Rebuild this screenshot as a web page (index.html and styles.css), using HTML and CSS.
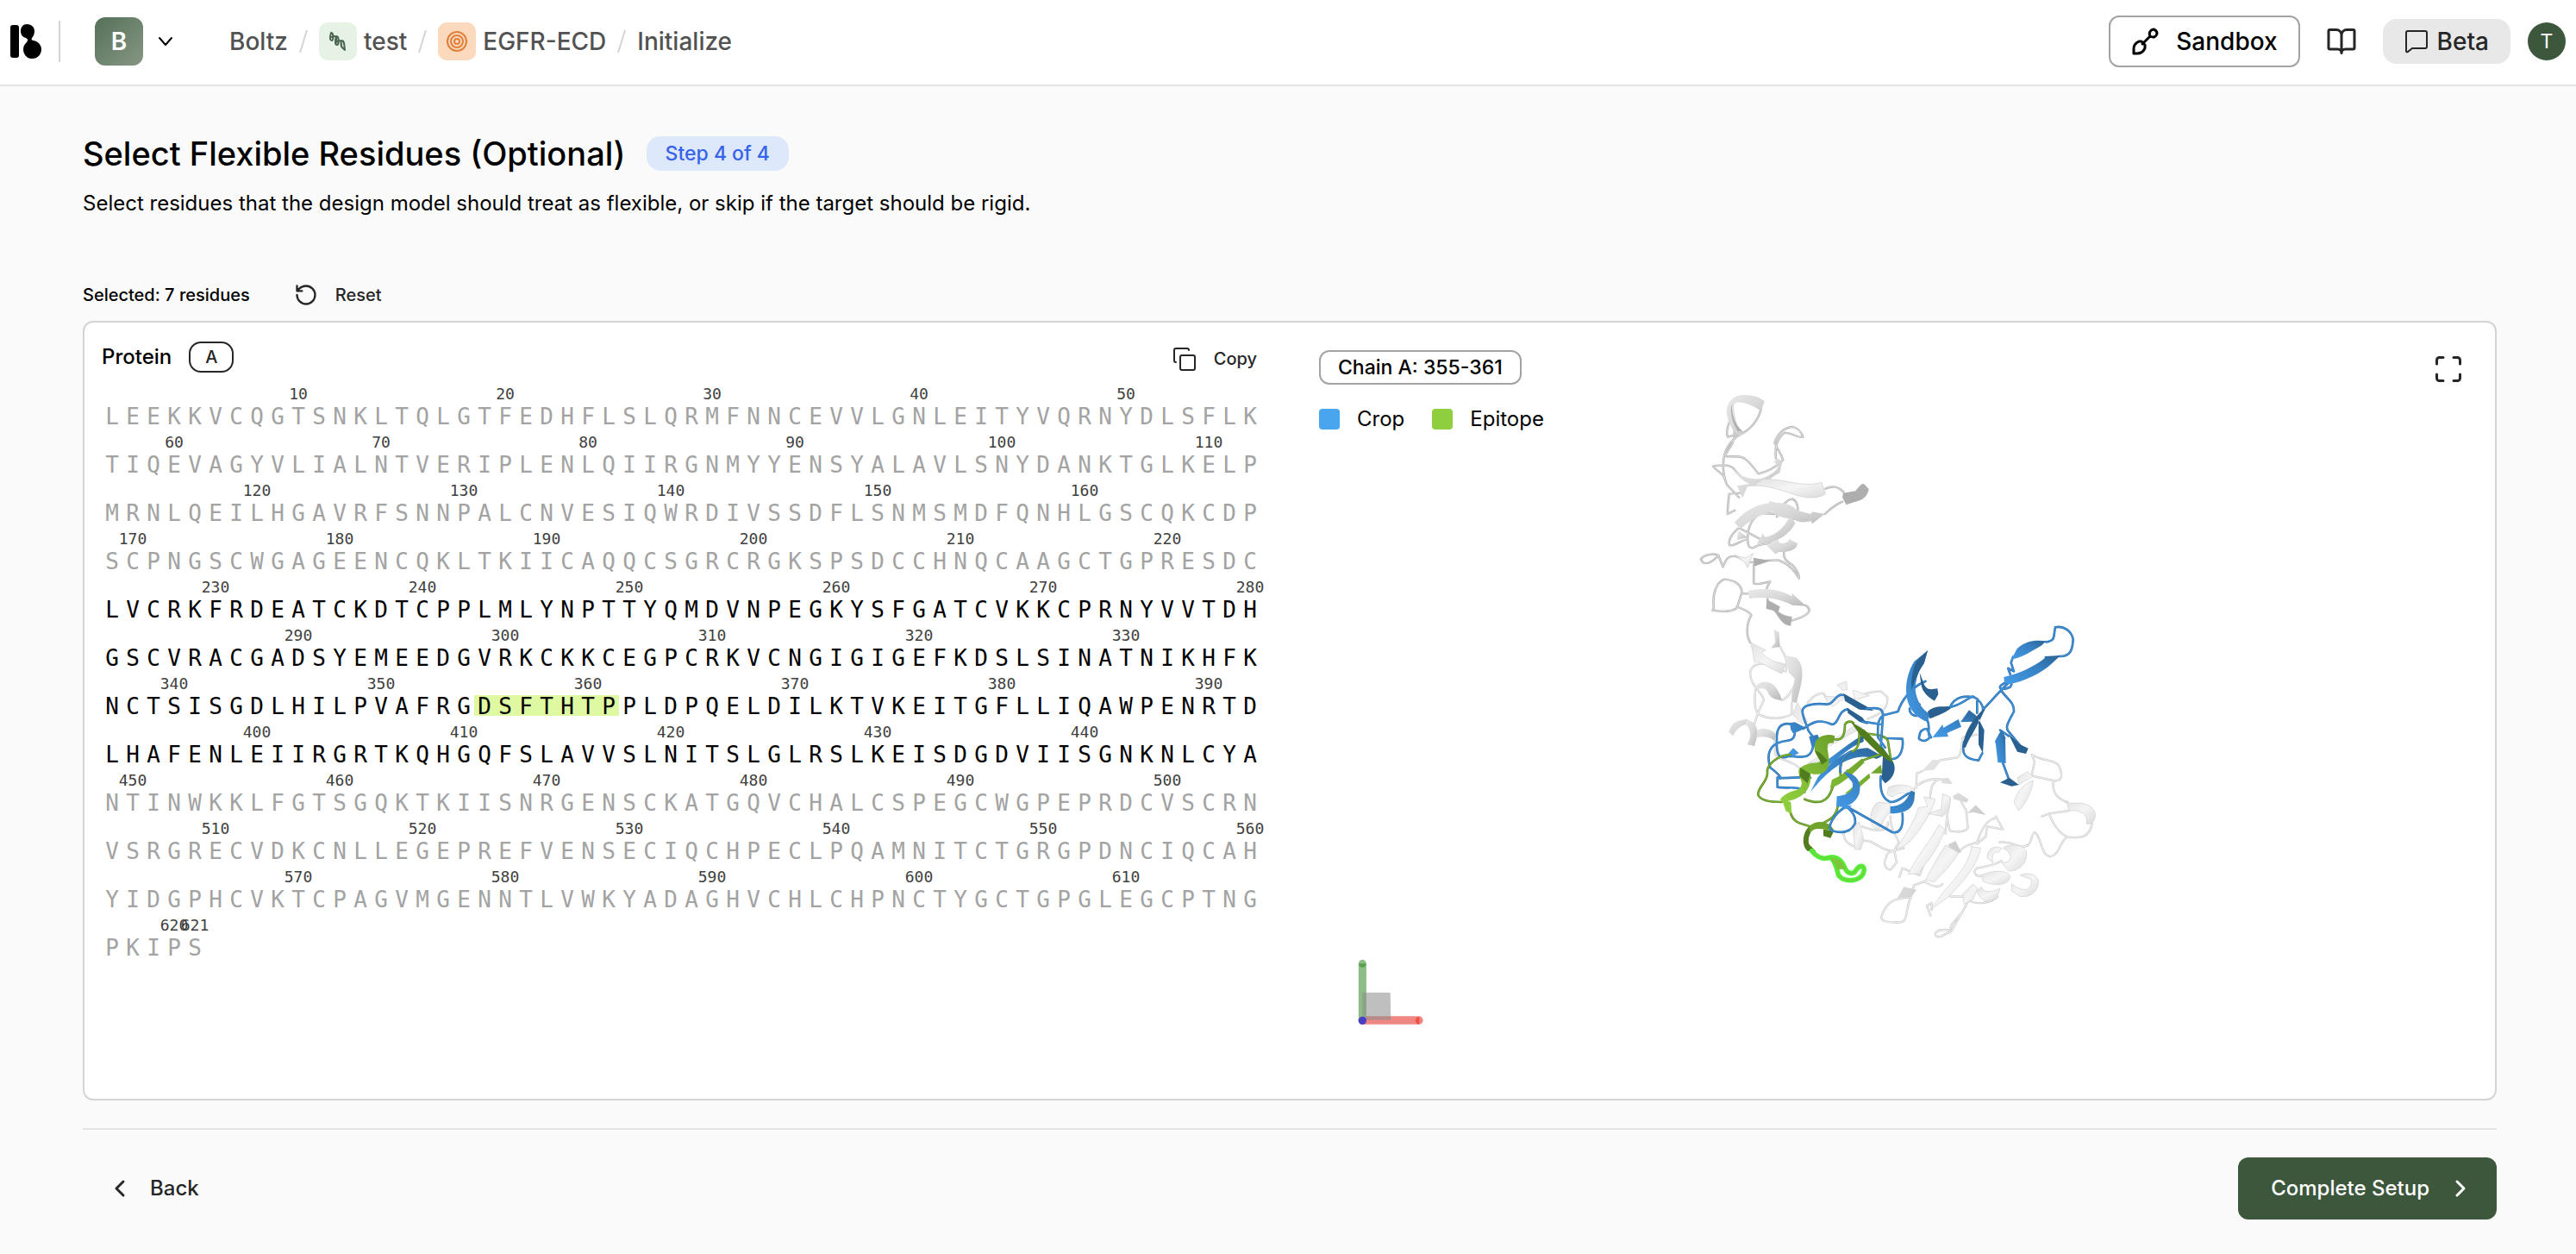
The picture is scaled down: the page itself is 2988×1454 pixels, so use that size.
FILE: index.html
```html
<!DOCTYPE html>
<html lang="en">
<head>
<meta charset="utf-8">
<title>EGFR-ECD – Initialize – Boltz</title>
<link rel="stylesheet" href="styles.css">
</head>
<body>
<header class="topbar">
  <a class="logo" href="#" aria-label="Home">
    <svg width="36" height="40" viewBox="0 0 36 40"><rect x="0" y="1" width="10" height="38" rx="3"/><path d="M19 0c5 0 9 3 9 8 0 3-1 6-3 8-1 2 0 3 2 3 5 1 9 5 9 10 0 6-4 11-11 11-6 0-10-5-10-11 0-4 2-6 4-8 2-3 1-4-1-5-4-1-6-4-6-8 0-5 3-8 7-8z"/></svg>
  </a>
  <span class="divider"></span>
  <button class="workspace" aria-label="Switch workspace">
    <span class="workspace-badge">B</span>
    <svg class="line" width="20" height="20" viewBox="0 0 20 20" stroke-width="2"><path d="M3 6l7 8 7-8"/></svg>
  </button>
  <nav class="crumbs" aria-label="Breadcrumb">
    <a href="#">Boltz</a>
    <svg class="slash" width="10" height="28" viewBox="0 0 10 28"><path d="M9 1L1 27"/></svg>
    <a class="crumb" href="#">
      <span class="tile tile-green"><svg class="line" width="24" height="24" viewBox="0 0 24 24" stroke-width="2"><path d="M4 2c3-1 3 9 1 9s-3-2-1-9M5 7c4-2 6-1 5 6M10 6c4 0 3 10 1 10s-3-3-1-10M11 12c4-2 5-1 5 6M16 11c4 0 3 5 4 11-3-2-6-5-4-11"/></svg></span>
      <span>test</span>
    </a>
    <svg class="slash" width="10" height="28" viewBox="0 0 10 28"><path d="M9 1L1 27"/></svg>
    <a class="crumb" href="#">
      <span class="tile tile-orange"><svg class="line" width="24" height="24" viewBox="0 0 24 24" stroke-width="2"><circle cx="12" cy="12" r="11"/><circle cx="12" cy="12" r="7"/><circle cx="12" cy="12" r="3"/></svg></span>
      <span>EGFR-ECD</span>
    </a>
    <svg class="slash" width="10" height="28" viewBox="0 0 10 28"><path d="M9 1L1 27"/></svg>
    <a href="#">Initialize</a>
  </nav>
  <div class="actions">
    <button class="sandbox">
      <svg class="line" width="32" height="32" viewBox="0 0 32 32" stroke-width="3"><path d="M13 19L22 10M22 10c-2-4 0-7 4-8 3 1 4 3 4 5-1 4-4 5-8 3zM9 16h3l4 4v4c-2 4-5 6-9 6H3v-6c0-4 2-6 6-8z"/></svg>
      <span>Sandbox</span>
    </button>
    <a class="docs" href="#" aria-label="Documentation"><svg class="line" width="36" height="36" viewBox="0 0 24 24" stroke-width="2"><path d="M12 7v14M3 18a1 1 0 0 1-1-1V4a1 1 0 0 1 1-1h5a4 4 0 0 1 4 4 4 4 0 0 1 4-4h5a1 1 0 0 1 1 1v13a1 1 0 0 1-1 1h-6a3 3 0 0 0-3 3 3 3 0 0 0-3-3z"/></svg></a>
    <button class="beta">
      <svg class="line" width="28" height="28" viewBox="0 0 28 28" stroke-width="2"><path d="M4 2h20q2 0 2 2v16q0 2-2 2H9l-5 4q-2 1-2-1V4q0-2 2-2z"/></svg>
      <span>Beta</span>
    </button>
    <button class="avatar" aria-label="Account">T</button>
  </div>
</header>

<main class="page">
  <div class="heading">
    <h1>Select Flexible Residues (Optional)</h1>
    <span class="step">Step 4 of 4</span>
  </div>
  <p class="lead">Select residues that the design model should treat as flexible, or skip if the target should be rigid.</p>

  <div class="selection">
    <span>Selected: 7 residues</span>
    <button class="plain reset">
      <svg class="line" width="28" height="28" viewBox="0 0 24 24" stroke-width="2"><path d="M3 12a9 9 0 1 0 9-9 9.750 9.750 0 0 0-6.740 2.740L3 8M3 3v5h5"/></svg>
      <span>Reset</span>
    </button>
  </div>

  <section class="card">
    <div class="sequence-panel">
      <div class="sequence-head">
        <span class="sequence-title">Protein</span>
        <button class="chain">A</button>
        <button class="plain copy">
          <svg class="line" width="28" height="28" viewBox="0 0 28 28" stroke-width="2"><rect x="9" y="10" width="17" height="17" rx="2"/><path d="M4 18q-2 0-2-2V4q0-2 2-2h13q2 0 2 2"/></svg>
          <span>Copy</span>
        </button>
      </div>
      <div class="sequence" id="sequence"></div>
    </div>

    <div class="viewer">
      <svg class="stage" viewBox="0 0 1398 900" role="img" aria-label="Protein structure">
        <defs>
          <linearGradient id="gray" x1="0" y1="0" x2="1" y2="1"><stop offset="0" stop-color="#e9e9e9"/><stop offset=".5" stop-color="#d9d9d9"/><stop offset="1" stop-color="#b8b8b8"/></linearGradient>
          <linearGradient id="pale" x1="0" y1="0" x2="1" y2="1"><stop offset="0" stop-color="#e2e2e2"/><stop offset=".5" stop-color="#f5f5f5"/><stop offset="1" stop-color="#dadada"/></linearGradient>
          <linearGradient id="blue" x1="0" y1="1" x2="1" y2="0"><stop offset="0" stop-color="#459ce8"/><stop offset=".6" stop-color="#3680c2"/><stop offset="1" stop-color="#2b6395"/></linearGradient>
          <linearGradient id="green" x1="0" y1="1" x2="1" y2="0"><stop offset="0" stop-color="#92d23f"/><stop offset="1" stop-color="#6c9f2b"/></linearGradient>
          <path id="coil-top" d="M343 105C335 140 310 175 275 192C255 205 235 225 225 260C218 290 220 330 232 365L272 410M240 150C232 175 230 190 236 200L285 185M258 155L256 205C250 235 232 245 228 265M232 268C260 268 280 265 290 275C310 290 325 315 335 328C360 322 395 305 415 280C412 265 400 250 388 220C395 190 420 165 448 165C465 170 475 185 480 200C465 205 455 190 420 185C395 205 388 240 392 275M188 302C215 295 250 295 262 320C275 335 290 350 305 358M188 302C200 320 220 325 225 345M275 395L240 398C238 420 235 440 235 468L258 455M553 380C575 370 590 370 612 392M608 425C585 435 570 450 550 468M270 518C245 540 235 565 242 577C255 580 270 565 300 555M278 520L345 557M395 478C405 450 420 420 445 415C465 425 470 460 450 485M390 468L350 465C320 470 300 510 300 550C300 580 305 590 320 585C340 570 365 572 385 568M418 602C415 625 430 635 445 645C460 660 468 680 467 692C455 670 440 645 400 628L360 630M148 625C160 605 195 605 205 612C190 630 170 645 155 637L148 625M205 612L220 652C230 620 240 612 262 615L300 635L320 636M320 645L320 710C340 715 360 705 373 703C360 725 358 735 365 765M300 745L280 745C285 725 270 700 225 695C200 705 185 740 190 795L186 803C215 808 250 808 265 795L280 745M265 790C285 800 305 805 312 820C295 850 295 890 308 915M488 785C510 800 505 820 445 838"/>
          <path id="coil-low" d="M315 150C320 170 345 180 335 235L300 230M320 210C270 205 215 200 210 240C212 290 255 310 258 335C240 370 230 400 225 420L195 405M320 335C345 330 360 290 370 275M228 300C225 340 225 370 240 385C280 405 330 400 355 385L355 345M296 478L298 520C300 545 350 540 380 570M410 345C430 320 450 310 465 312L490 350M575 330C610 310 640 305 665 305L688 325C690 370 660 385 620 400M600 775C640 790 690 800 690 760M535 795C535 830 560 840 575 845M605 825C640 820 660 855 700 860L745 850M1000 455L950 465C945 500 945 530 930 535L870 545M808 583L790 590L788 640M780 645C800 620 830 608 870 610C835 620 840 660 835 680M698 740C700 790 715 800 728 830L710 860M905 680L895 740L905 790C930 795 960 795 968 780L962 720L935 670M895 740L890 800M1065 740L1090 785L1035 775L1030 810L1000 835M1065 745C1040 750 1020 770 1000 830C970 840 960 838 935 865M745 850C700 860 680 870 685 880C670 900 680 925 700 925L720 900L712 860M730 950L740 920L800 945L815 905M815 965C850 990 870 985 880 975M770 1020C740 1025 690 1020 668 1085C660 1105 690 1110 735 1108C760 1105 750 1060 770 1020L780 980L820 965M838 1085L825 1050L842 1040L842 1065M905 1018L975 1020C960 1060 930 1100 910 1140C890 1145 875 1165 860 1158C845 1145 860 1130 905 1135L912 1115L950 1070M1020 945C990 955 985 925 1000 920C1030 915 1060 910 1085 895M975 1035C1000 1045 1040 1045 1070 1020M1078 830C1110 825 1140 845 1165 845C1195 840 1185 800 1200 795C1225 810 1220 875 1255 880C1290 870 1290 820 1315 812C1350 815 1390 820 1400 765M1190 525C1230 550 1270 540 1285 565C1300 600 1295 620 1265 615C1240 610 1215 605 1190 598L1200 550L1190 525M1265 615C1260 670 1290 680 1310 690M1225 740L1250 730L1320 720M1250 730C1270 780 1290 800 1315 812"/>
          <path id="coil-blue-back" d="M535 318C510 310 500 350 480 350C440 345 390 350 392 375C395 405 410 425 412 440L430 465M550 367C515 370 520 420 495 420C450 400 430 410 395 435M360 445L355 420C320 410 300 430 303 475C300 540 320 540 345 530M365 440C370 480 340 475 320 480C280 490 265 520 280 570C320 600 325 615 305 605L305 638C340 645 380 630 400 655M305 605C340 610 390 600 420 605M345 530C400 535 420 540 430 495"/>
          <path id="coil-blue" d="M1240 133C1275 130 1265 110 1272 82C1300 75 1330 95 1334 125C1332 160 1325 185 1285 183M1125 185L1118 205L1128 235L1108 225L1115 245M1108 270C1060 290 1080 305 1115 290L1120 280M1110 275C1080 300 1050 340 1020 368M1083 300C1100 330 1130 340 1128 375C1110 410 1095 430 1110 445L1155 500M1080 440L1110 460M1090 555L1112 615M820 270C770 290 735 340 725 375L675 388C650 400 655 440 655 465L680 500M905 360C925 320 960 320 990 325C1010 335 1020 355 1022 370M890 362C930 360 950 340 985 322M1000 330L1000 380M955 480C945 520 955 540 1005 545L1018 520M765 365C765 390 790 395 810 385C805 365 790 355 800 350M825 400C840 430 825 445 835 465C820 485 795 475 798 465C800 445 810 435 825 435L840 465M615 365C660 360 675 365 672 395L665 495M600 410L670 420M690 468L740 470C745 500 735 540 705 540M665 600C660 650 670 680 700 690C740 690 750 650 780 660M740 730C745 780 730 800 705 795L545 705C500 730 475 780 495 790C530 800 560 795 575 765C580 735 560 720 545 705M525 585C520 550 535 525 560 515"/>
          <path id="coil-green" d="M350 525C310 525 265 560 270 590C270 620 235 640 238 665C245 685 280 690 320 690M400 680C450 700 480 690 495 645C510 600 530 610 550 580M515 705C510 740 490 750 460 765M350 725C360 765 390 765 420 775M500 470C530 480 540 460 540 420C550 405 565 410 570 415M590 450C590 490 585 510 560 515C530 530 520 560 525 600M600 450C650 455 690 460 690 480L700 545M600 545L675 520"/>
          <path id="coil-picked" d="M425 860C445 885 470 890 490 882C510 900 510 920 518 945C535 970 600 970 606 930C610 907 590 910 580 925C570 945 550 940 540 920C530 895 515 880 490 882"/>
        </defs>

        <g transform="translate(424 66) scale(.35714 .33333)">
          <use href="#coil-top" class="coil gray-edge"/><use href="#coil-top" class="coil gray-core"/>
          <g class="ribbon-gray">
            <path d="M232 105C236 80 250 58 280 54C310 52 340 60 355 76L343 110C320 92 290 78 262 80C250 90 255 120 275 188L262 190C245 165 230 135 232 105Z"/>
            <path d="M258 316C280 340 310 350 345 345C370 335 395 320 400 300L385 285L400 275L412 290L404 325C385 335 370 350 345 370L300 372L283 412L266 370L310 362C285 352 265 340 258 316Z"/>
            <path d="M278 520L257 498C290 455 330 435 370 430L370 422L390 428C430 430 450 440 460 455L505 468L510 460L550 468L510 502L505 492C480 500 465 495 455 490C435 480 400 485 380 460C340 470 300 495 278 520Z"/>
            <path d="M440 475L455 500C435 540 400 560 365 570L330 572L350 535L356 548C385 545 415 520 430 490Z"/>
            <path d="M385 560L400 558L402 568C425 575 435 560 435 555L462 570C460 590 440 602 402 600L390 607L362 578Z"/>
            <path d="M270 525L300 550L265 558Z"/>
            <path d="M302 735C340 725 400 725 445 755L442 742L490 788L445 785C400 760 350 755 305 762Z"/>
            <path d="M385 870L402 880L405 930L375 935L390 915Z"/>
          </g>
          <g class="ribbon-pale">
            <path d="M350 345L400 350C440 355 490 375 540 358L553 398C530 415 490 415 450 400C410 385 370 370 320 368Z"/>
            <path d="M262 615L295 620L318 604L300 655L290 635Z"/>
          </g>
          <g fill="#aeaeae">
            <path d="M610 395L650 388C662 375 670 358 680 365L694 382C690 400 680 420 650 425L620 436L608 410Z"/>
            <path d="M318 620L375 630L322 650Z"/>
            <path d="M362 765L405 790L400 808C415 820 430 825 444 825L440 857C410 855 405 830 385 805L360 797Z"/>
            <path d="M250 85C245 120 260 160 285 182L268 180C250 150 240 110 250 85Z"/>
          </g>
        </g>

        <g transform="translate(464 326) scale(.33333)">
          <use href="#coil-low" class="coil low-edge"/><use href="#coil-low" class="coil low-core"/>
          <g class="ribbon-gray">
            <path d="M335 180L372 188C395 210 395 250 385 290C380 310 375 330 372 345L355 342C352 320 360 290 365 260L345 240Z"/>
            <path d="M228 300C230 275 255 265 280 275C300 285 315 310 320 335C300 335 280 330 270 305C262 290 240 295 228 300Z"/>
            <path d="M140 435C150 410 180 400 205 405L195 420C175 425 160 440 150 460L135 445Z"/>
            <path d="M195 405C225 410 240 430 235 460L225 495L200 490C215 460 215 440 195 420Z"/>
            <path d="M235 440C255 428 280 435 298 450L296 478C275 460 255 462 232 465Z"/>
            <path d="M805 585L845 542L875 545L850 578L825 580ZM868 608L900 605L915 628L880 625ZM915 670L935 658L970 680L965 692L920 680ZM965 730L995 700L1030 735L985 725ZM898 838L925 825L945 865L915 865ZM745 985L790 995L770 1020L722 1025Z"/>
          </g>
          <g class="ribbon-pale">
            <path d="M212 135L265 162L250 168C270 195 300 205 335 210L320 243C280 225 250 205 232 200L226 205Z"/>
            <path d="M358 385L375 345L410 410L390 418ZM512 282L545 270L548 300L530 300ZM470 322L540 325L500 358L480 345ZM568 300L625 320L575 335ZM460 500L580 420L600 430L470 505ZM410 555L480 515L450 550Z"/>
            <path d="M690 640C720 625 760 628 782 645L780 690L760 680C760 655 730 650 705 672L688 665Z"/>
            <path d="M655 690L698 695L698 728C670 740 675 780 650 785C620 770 625 710 655 690Z"/>
            <path d="M568 770L590 760L605 820L595 855L575 855Z"/>
            <path d="M815 672L855 680L838 725C800 790 760 850 718 853C760 790 790 740 795 710L828 705Z"/>
            <path d="M868 768L888 785C870 840 830 900 790 940L760 940C790 880 840 820 868 768Z"/>
            <path d="M890 840L935 865C920 900 870 950 850 968L822 960C840 920 870 870 890 840Z"/>
            <path d="M980 845L1012 850C1005 900 960 960 900 1020L838 1065L885 1000C930 950 975 900 980 845Z"/>
            <path d="M880 660L905 672C910 700 900 720 880 740L830 730L875 715Z"/>
            <path d="M1035 885C1035 850 1060 840 1085 850L1075 865C1055 860 1050 880 1055 900Z"/>
            <path d="M1090 850C1120 830 1165 840 1172 865C1175 900 1150 930 1110 930L1085 900C1120 905 1130 870 1090 850Z"/>
            <path d="M1015 945C1050 925 1110 925 1115 950C1110 980 1060 985 1020 965Z"/>
            <path d="M1120 975L1120 1000L1150 1018C1180 1025 1220 1000 1212 960C1200 935 1165 935 1150 945L1190 960C1190 1000 1160 1005 1120 975Z"/>
            <path d="M1000 1000C1010 1035 1040 1045 1070 1020L1080 990C1040 1010 1020 1000 1015 985Z"/>
            <path d="M950 1010L985 975L1003 990L985 1030L955 1045Z"/>
            <path d="M1140 605L1175 585L1195 600L1145 630ZM1195 615C1190 660 1165 700 1145 720L1128 690C1140 650 1165 625 1195 615Z"/>
            <path d="M1310 685L1325 695C1360 690 1400 695 1412 730C1412 755 1400 770 1380 765C1390 730 1350 715 1320 720Z"/>
          </g>

          <use href="#coil-blue-back" class="coil blue-edge"/><use href="#coil-blue-back" class="coil blue-core"/>
          <g class="ribbon-blue">
            <path d="M348 415L365 412L405 432L370 448L352 440ZM415 462L445 455L460 490L425 500ZM342 522L360 502L380 520L360 530Z"/>
            <path d="M455 560C500 530 560 480 605 455L605 480C550 500 520 540 470 570L435 570Z"/>
            <path d="M420 655L445 605C490 550 540 505 620 502L670 530L650 540C560 510 490 580 450 620Z"/>
          </g>
          <g fill="#29608f">
            <path d="M535 312L620 360L640 372L590 368L540 338ZM548 362L600 395L620 420L590 410L550 380Z"/>
            <path d="M665 490L700 540C720 560 720 600 680 625L668 610L672 530Z"/>
          </g>
          <use href="#coil-green" class="coil green-edge"/><use href="#coil-green" class="coil green-core"/>
          <g class="ribbon-green">
            <path d="M435 490C440 460 480 450 505 460L500 485C470 480 480 500 485 545C485 590 450 600 420 590C425 630 410 680 320 690L315 680C350 640 385 660 390 625C385 600 370 580 385 570C420 545 450 560 455 545C440 530 430 510 435 490Z"/>
            <path d="M320 680L352 690L355 730L335 722ZM488 642L495 612L525 598L600 538L608 552C570 590 530 630 488 642ZM540 660L625 590L628 605L560 665ZM630 590L665 560L670 590Z"/>
          </g>
          <g fill="#527d1f">
            <path d="M560 410L610 440C650 480 690 520 708 552L690 545C640 510 610 470 595 460Z"/>
            <path d="M465 785L502 790L490 815L465 808ZM435 510L460 560L480 545L455 520ZM382 600L410 625L420 592L385 570Z"/>
            <path d="M415 775L425 790C410 810 412 835 418 840L440 862L410 860C390 845 390 800 415 775Z"/>
          </g>
          <path fill="#70a32c" d="M415 775C440 750 490 755 502 790L470 785C440 780 425 785 418 800Z"/>
          <use href="#coil-blue" class="coil blue-edge"/><use href="#coil-blue" class="coil blue-core"/>
          <g class="ribbon-blue">
            <path d="M1118 195L1140 155C1170 130 1200 125 1240 130L1225 145C1190 165 1160 185 1125 193Z"/>
            <path d="M1093 255C1140 245 1190 225 1235 190L1235 183L1290 180L1258 210C1220 245 1160 270 1115 280L1095 275Z"/>
            <path d="M828 163L782 200C755 240 745 300 760 345C770 375 795 400 825 410L838 385C810 370 790 340 785 300C785 265 795 235 815 208Z"/>
            <path d="M845 465L880 420L882 432L935 402L945 428L895 450L900 462ZM942 412L972 370L998 390L1000 410Z"/>
            <path d="M1085 437L1100 468L1098 470L1100 555L1072 552L1065 490L1062 478Z"/>
            <path d="M535 585C580 590 600 620 590 660C575 700 540 710 510 705L512 670C545 665 575 655 565 620ZM698 705C730 705 755 690 770 650L782 655C785 700 770 730 698 730ZM515 700L565 702L545 715Z"/>
          </g>
          <g fill="#29608f">
            <path d="M800 240L812 270C820 300 835 300 862 295L865 315L852 338C830 325 810 310 805 280Z"/>
            <path d="M828 375C850 355 880 355 910 362C890 380 860 390 835 400Z"/>
            <path d="M1018 370C990 400 955 440 950 500L960 500C970 470 990 450 1028 365ZM1005 400L1025 440L1020 520L1005 490Z"/>
            <path d="M1110 455L1150 490L1178 503L1170 522L1140 515ZM1080 622L1112 605L1145 630L1120 635Z"/>
            <path d="M828 163L790 200C775 230 770 260 772 300C785 265 795 235 815 208Z"/>
          </g>
          <use href="#coil-picked" class="coil picked-edge"/><use href="#coil-picked" class="coil picked-core"/>
          <path fill="#7cc63a" d="M490 885L525 892L545 922L515 925Z"/>
        </g>

        <g transform="translate(44 706) scale(.33333)">
          <path d="M121 309L318 309" stroke="#f08783" stroke-width="28" stroke-linecap="round"/>
          <path d="M121 309L121 112" stroke="#8cbd86" stroke-width="27" stroke-linecap="round"/>
          <path d="M121 212L218 213L220 308L121 308Z" fill="#8a8a8a" fill-opacity=".55"/>
          <path d="M108 112h26a13 13 0 0 1-26 0z" fill="#5aa04b"/>
          <path d="M319 297v26a13 13 0 0 1 0-26z" fill="#ee4f45"/>
          <circle cx="121" cy="310" r="14" fill="#4a3fc4"/>
        </g>
      </svg>
      <div class="overlay">
        <div class="overlay-info">
          <span class="range">Chain A: 355-361</span>
          <ul class="legend">
            <li><span class="swatch swatch-crop"></span>Crop</li>
            <li><span class="swatch swatch-epitope"></span>Epitope</li>
          </ul>
        </div>
        <button class="plain fullscreen" aria-label="Full screen"><svg class="line" width="36" height="36" viewBox="0 0 24 24" stroke-width="2"><path d="M8 3H5a2 2 0 0 0-2 2v3M21 8V5a2 2 0 0 0-2-2h-3M3 16v3a2 2 0 0 0 2 2h3M16 21h3a2 2 0 0 0 2-2v-3"/></svg></button>
      </div>
    </div>
  </section>

  <footer class="footer">
    <button class="plain back">
      <svg class="line" width="24" height="24" viewBox="0 0 24 24" stroke-width="3"><path d="M15 4l-8 8 8 8"/></svg>
      <span>Back</span>
    </button>
    <button class="complete">
      <span>Complete Setup</span>
      <svg class="line" width="24" height="24" viewBox="0 0 24 24" stroke-width="3"><path d="M8 4l8 8-8 8"/></svg>
    </button>
  </footer>
</main>
<script src="sequence.js"></script>
</body>
</html>
```
FILE: styles.css
```css
* { box-sizing: border-box; }

body {
  margin: 0;
  background: #fafafa;
  color: #000;
  font: 400 24px/32px Inter, "Liberation Sans", sans-serif;
}

button {
  margin: 0;
  padding: 0;
  border: 0;
  background: none;
  color: inherit;
  font: inherit;
  cursor: pointer;
}

a { color: inherit; text-decoration: none; }

svg { display: block; flex: none; }

.line {
  fill: none;
  stroke: currentColor;
  stroke-linecap: round;
  stroke-linejoin: round;
}

.plain {
  display: flex;
  align-items: center;
  color: #262626;
}

/* Top bar */
.topbar {
  display: flex;
  align-items: center;
  padding: 18px 12px 20px;
  border-bottom: 2px solid #e5e5e5;
  background: #fff;
  font-size: 28px;
  font-weight: 500;
}

.divider {
  width: 2px;
  height: 48px;
  margin: 0 40px 0 20px;
  background: #d4d4d4;
}

.workspace { display: flex; align-items: center; gap: 16px; }

.workspace-badge {
  display: grid;
  place-items: center;
  width: 56px;
  height: 56px;
  border-radius: 12px;
  background: linear-gradient(135deg, #557058, #869783);
  color: #fff;
  font-weight: 600;
}

.crumbs {
  display: flex;
  align-items: center;
  gap: 13px;
  margin-left: 64px;
  color: #525252;
}

.crumb { display: flex; align-items: center; gap: 8px; }

.slash { fill: none; stroke: #d4d4d4; stroke-width: 2; }

.tile {
  display: grid;
  place-items: center;
  width: 44px;
  height: 44px;
  border-radius: 10px;
}

.tile-green { background: #e6f2e6; color: #4b6650; }
.tile-orange { background: #fad9bd; color: #e0803a; }

.actions {
  display: flex;
  align-items: center;
  margin-left: auto;
}

.sandbox {
  display: flex;
  align-items: center;
  gap: 20px;
  height: 60px;
  padding: 0 24px;
  border: 2px solid #a3a3a3;
  border-radius: 12px;
}

.docs { margin: 0 30px; color: #262626; }

.beta {
  display: flex;
  align-items: center;
  gap: 10px;
  height: 52px;
  padding: 0 25px;
  border-radius: 16px;
  background: #e8e8e8;
  color: #262626;
}

.avatar {
  width: 44px;
  height: 44px;
  margin-left: 20px;
  border-radius: 50%;
  background: #3d573d;
  color: #fff;
  font-size: 23px;
  font-weight: 400;
}

/* Page */
.page { padding: 54px 92px 40px 96px; }

.heading { display: flex; align-items: center; gap: 24px; }

h1 {
  margin: 0;
  font-size: 38px;
  font-weight: 500;
  line-height: 48px;
}

.step {
  padding: 4px 22px;
  border-radius: 16px;
  background: #dde8fb;
  color: #3563e9;
  font-size: 23px;
  font-weight: 500;
}

.lead { margin: 18px 0 0; }

.selection {
  display: flex;
  align-items: center;
  gap: 51px;
  margin-top: 74px;
  font-size: 20px;
  font-weight: 500;
}

.reset { gap: 20px; }

.card {
  display: grid;
  grid-template-columns: 1fr 1fr;
  min-height: 904px;
  margin-top: 14px;
  border: 2px solid #d4d4d4;
  border-radius: 12px;
  background: #fff;
}

.sequence-panel { padding: 22px 20px; }

.sequence-head {
  display: flex;
  align-items: center;
  height: 36px;
  margin-bottom: 6px;
}

.sequence-title { font-weight: 500; }

.chain {
  width: 52px;
  height: 36px;
  margin-left: 20px;
  border: 2px solid #262626;
  border-radius: 14px;
  color: #262626;
  font-size: 20px;
  font-weight: 500;
  line-height: 32px;
}

.copy {
  gap: 20px;
  margin-left: auto;
  padding: 4px 18px 0 0;
  font-size: 20px;
  font-weight: 500;
}

/* Residue cells wrap to the width of the panel */
.sequence {
  display: flex;
  flex-wrap: wrap;
  font-family: "DejaVu Sans Mono", monospace;
  line-height: 26px;
}

.residue {
  display: flex;
  flex-direction: column;
  align-items: center;
  gap: 2px;
  width: 24px;
  padding-top: 6px;
  color: #a3a3a3;
}

.residue-number { height: 24px; color: #404040; font-size: 18px; }
.residue-letter { width: 24px; height: 24px; text-align: center; font-size: 26px; }
.residue.cropped { color: #000; }
.residue.picked .residue-letter { background: #dff9a3; }

/* Structure viewer */
.viewer { position: relative; }

.stage {
  position: absolute;
  inset: 0;
  width: 100%;
  height: 100%;
}

.overlay {
  position: relative;
  display: flex;
  align-items: flex-start;
  justify-content: space-between;
  padding: 32px 36px 0 34px;
}

.range {
  display: inline-block;
  padding: 2px 20px;
  border: 2px solid #a3a3a3;
  border-radius: 12px;
  background: #fff;
  font-size: 23px;
  font-weight: 500;
}

.legend {
  display: flex;
  gap: 32px;
  margin: 24px 0 0;
  padding: 0;
  list-style: none;
}

.legend li { display: flex; align-items: center; gap: 20px; }

.swatch { width: 24px; height: 24px; border-radius: 4px; }
.swatch-crop { background: #4aa5ef; }
.swatch-epitope { background: #8fcf3f; }

.fullscreen { padding-top: 4px; }

.coil { fill: none; stroke-linecap: round; stroke-linejoin: round; }
.gray-edge { stroke: #b0b0b0; stroke-width: 7; }
.gray-core { stroke: #dcdcdc; stroke-width: 3; }
.low-edge { stroke: #c4c4c4; stroke-width: 7; }
.low-core { stroke: #ececec; stroke-width: 4; }
.blue-edge { stroke: #2b6ca8; stroke-width: 8; }
.blue-core { stroke: #3f93dd; stroke-width: 4; }
.green-edge { stroke: #56821f; stroke-width: 8; }
.green-core { stroke: #7db534; stroke-width: 4; }
.picked-edge { stroke: #55ee38; stroke-width: 17; }
.picked-core { stroke: #6fd23c; stroke-width: 4; }
.ribbon-gray { fill: url(#gray); }
.ribbon-pale { fill: url(#pale); stroke: #cecece; stroke-width: 2; }
.ribbon-blue { fill: url(#blue); }
.ribbon-green { fill: url(#green); }

/* Footer */
.footer {
  display: flex;
  align-items: center;
  justify-content: space-between;
  margin-top: 32px;
  padding-top: 32px;
  border-top: 2px solid #e5e5e5;
  font-weight: 500;
}

.back { gap: 22px; padding: 20px 32px; }

.complete {
  display: flex;
  align-items: center;
  gap: 24px;
  height: 72px;
  padding: 0 30px 0 38px;
  border-radius: 12px;
  background: #3d573d;
  color: #fff;
}
```
FILE: sequence.js
```js
const SEQUENCE = [
  "LEEKKVCQGTSNKLTQLGTFEDHFLSLQRMFNNCEVVLGNLEITYVQRNYDLSFLK",
  "TIQEVAGYVLIALNTVERIPLENLQIIRGNMYYENSYALAVLSNYDANKTGLKELP",
  "MRNLQEILHGAVRFSNNPALCNVESIQWRDIVSSDFLSNMSMDFQNHLGSCQKCDP",
  "SCPNGSCWGAGEENCQKLTKIICAQQCSGRCRGKSPSDCCHNQCAAGCTGPRESDC",
  "LVCRKFRDEATCKDTCPPLMLYNPTTYQMDVNPEGKYSFGATCVKKCPRNYVVTDH",
  "GSCVRACGADSYEMEEDGVRKCKKCEGPCRKVCNGIGIGEFKDSLSINATNIKHFK",
  "NCTSISGDLHILPVAFRGDSFTHTPPLDPQELDILKTVKEITGFLLIQAWPENRTD",
  "LHAFENLEIIRGRTKQHGQFSLAVVSLNITSLGLRSLKEISDGDVIISGNKNLCYA",
  "NTINWKKLFGTSGQKTKIISNRGENSCKATGQVCHALCSPEGCWGPEPRDCVSCRN",
  "VSRGRECVDKCNLLEGEPREFVENSECIQCHPECLPQAMNITCTGRGPDNCIQCAH",
  "YIDGPHCVKTCPAGVMGENNTLVWKYADAGHVCHLCHPNCTYGCTGPGLEGCPTNG",
  "PKIPS"
].join("");

const CROP = [225, 448];
const PICKED = [355, 361];
const inside = (n, range) => n >= range[0] && n <= range[1];

const root = document.getElementById("sequence");

[...SEQUENCE].forEach((letter, index) => {
  const position = index + 1;
  const cell = document.createElement("span");
  cell.className = "residue";
  if (inside(position, CROP)) cell.classList.add("cropped");
  if (inside(position, PICKED)) cell.classList.add("picked");

  const number = document.createElement("span");
  number.className = "residue-number";
  if (position % 10 === 0 || position === SEQUENCE.length) number.textContent = position;

  const symbol = document.createElement("span");
  symbol.className = "residue-letter";
  symbol.textContent = letter;

  cell.append(number, symbol);
  root.append(cell);
});
```
